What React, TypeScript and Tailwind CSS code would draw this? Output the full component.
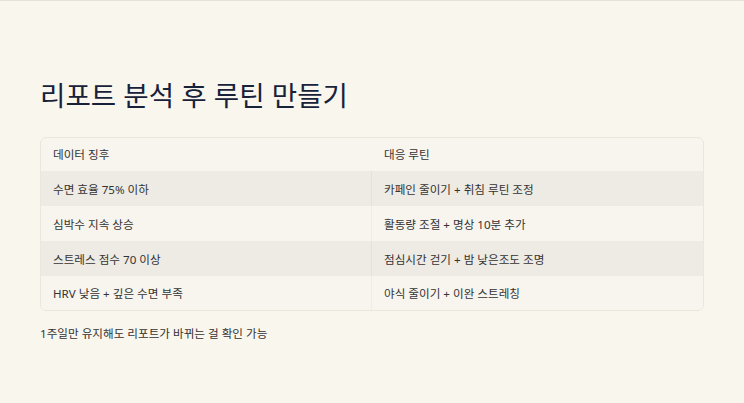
import React from "react";

const rows = [
  ["수면 효율 75% 이하", "카페인 줄이기 + 취침 루틴 조정"],
  ["심박수 지속 상승", "활동량 조절 + 명상 10분 추가"],
  ["스트레스 점수 70 이상", "점심시간 걷기 + 밤 낮은조도 조명"],
  ["HRV 낮음 + 깊은 수면 부족", "야식 줄이기 + 이완 스트레칭"],
];

export default function App() {
  return (
    <div
      className="w-[744px] h-[403px] bg-[#f9f6ed] border-t border-[#e6e2d9] px-10 pt-[76px]"
      style={{ fontFamily: '"Noto Sans", "Noto Sans CJK KR", sans-serif' }}
    >
      <h1 className="text-[27.6px] leading-[36px] text-[#17223a] font-normal">
        리포트 분석 후 루틴 만들기
      </h1>
      <div className="mt-[24px] rounded-md border border-[#ece7dd] overflow-hidden bg-[#f8f5ee] text-[11.6px] text-[#333333]">
        <div className="grid grid-cols-2 h-[33px]">
          <div className="px-3 pt-[1px] flex items-center">데이터 징후</div>
          <div className="px-3 pt-[1px] flex items-center">대응 루틴</div>
        </div>
        {rows.map((r, i) => (
          <div
            key={i}
            className={`grid grid-cols-2 ${i === 3 ? "h-[34px]" : "h-[35px]"} ${
              i % 2 === 0 ? "bg-[#eeebe4]" : "bg-[#f8f5ee]"
            }`}
          >
            <div className={`px-3 pt-[2px] flex items-center ${i % 2 === 0 ? "border-r border-[#e5e1d8]" : "border-r border-[#f1ede5]"}`}>{r[0]}</div>
            <div className="px-3 pt-[2px] flex items-center">{r[1]}</div>
          </div>
        ))}
      </div>
      <p className="mt-[14px] text-[11.6px] text-[#333333]">1주일만 유지해도 리포트가 바뀌는 걸 확인 가능</p>
    </div>
  );
}
